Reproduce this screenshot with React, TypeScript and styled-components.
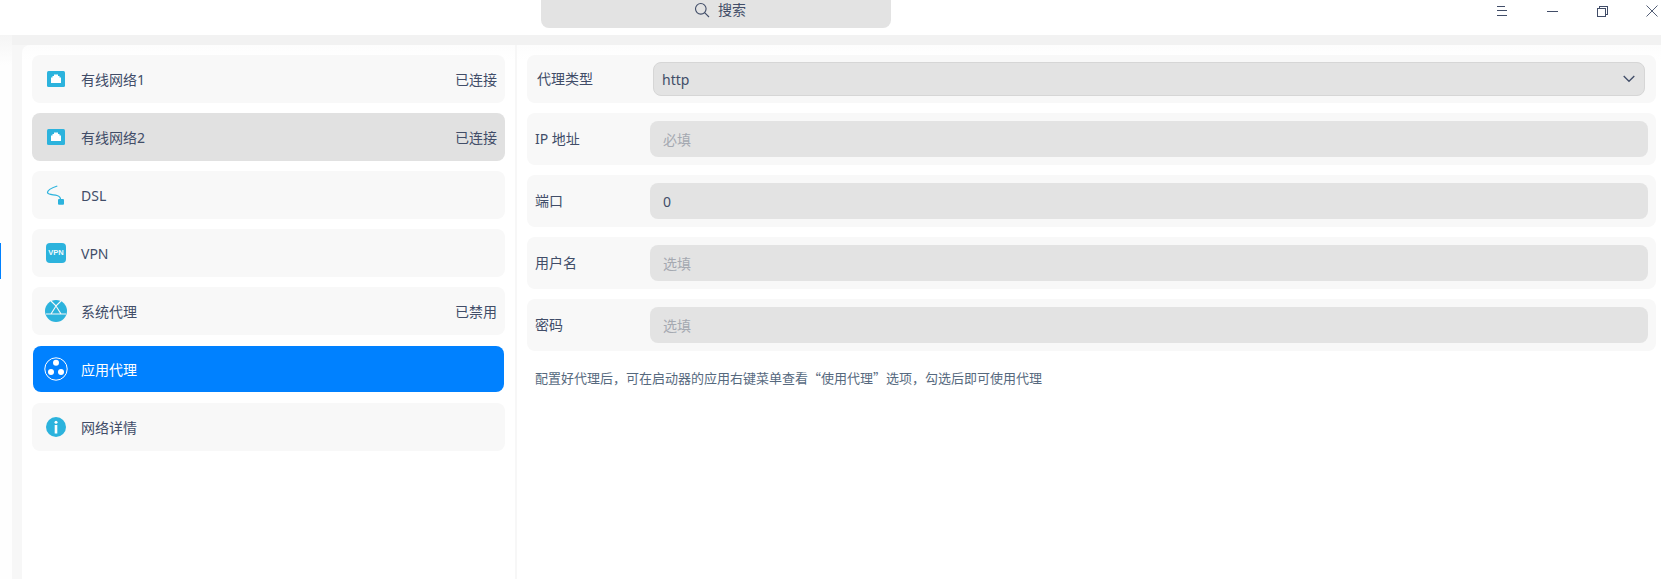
import * as React from 'react';
import styled, { createGlobalStyle } from 'styled-components';

const GlobalStyle = createGlobalStyle`
  html, body {
    margin: 0;
    padding: 0;
    height: 100%;
    overflow: hidden;
    background: #fff;
  }
  body {
    font-family: 'Noto Sans', 'Noto Sans CJK SC', sans-serif;
    font-size: 14px;
    color: #414d68;
  }
`;

const Window = styled.div`
  display: flex;
  flex-direction: column;
  height: 100vh;
  overflow: hidden;
`;

const TitleBar = styled.header`
  display: flex;
  align-items: flex-start;
  flex: 0 0 35px;
  padding-left: 541px;
  background: #fff;
`;

const SearchBox = styled.div`
  display: flex;
  align-items: flex-start;
  justify-content: center;
  gap: 8px;
  width: 350px;
  height: 28px;
  box-sizing: border-box;
  padding: 0 0 0 8px;
  border-radius: 0 0 8px 8px;
  background: #e3e3e3;
  line-height: 20px;
  svg {
    margin-top: 2px;
  }
`;

const WindowButtons = styled.div`
  display: flex;
  margin-left: auto;
  margin-right: -16px;
`;

const WindowButton = styled.div`
  display: flex;
  align-items: center;
  justify-content: center;
  width: 50px;
  height: 22px;
`;

const Body = styled.div`
  display: flex;
  flex: 1;
  min-height: 0;
`;

const Rail = styled.div`
  flex: 0 0 12px;
  padding-top: 208px;
  background: linear-gradient(#f5f5f5, #fefefe 30px);
`;

const RailMark = styled.div`
  width: 1px;
  height: 36px;
  background: #0081ff;
`;

const Content = styled.div`
  display: flex;
  flex: 1;
  min-width: 0;
  padding: 10px 0 0 10px;
  background: linear-gradient(#f2f2f2 10px, #f7f7f7 10px);
`;

const Panel = styled.main`
  display: flex;
  flex: 1;
  min-width: 0;
  border-radius: 8px 0 0 0;
  background: linear-gradient(#fdfdfd, #fff 15px);
`;

const Sidebar = styled.nav`
  display: flex;
  flex-direction: column;
  gap: 10px;
  flex: 0 0 495px;
  box-sizing: border-box;
  padding: 10px 10px 0 10px;
  border-right: 2px solid #f7f7f7;
`;

const NavItem = styled.div<{ $state?: 'hover' | 'active' }>`
  display: flex;
  align-items: center;
  height: ${(p) => (p.$state === 'active' ? 46 : 48)}px;
  margin: ${(p) => (p.$state === 'active' ? '1px' : '0')};
  box-sizing: border-box;
  padding: ${(p) => (p.$state === 'active' ? '0 7px 0 11px' : '0 8px 0 12px')};
  border-radius: 8px;
  background-color: ${(p) =>
    p.$state === 'active' ? '#0081ff' : p.$state === 'hover' ? '#e1e1e1' : '#f8f8f8'};
  color: ${(p) => (p.$state === 'active' ? '#fff' : '#414d68')};
`;

const NavIcon = styled.span`
  display: flex;
  align-items: center;
  justify-content: center;
  flex: 0 0 24px;
  height: 24px;
  margin-right: 13px;
`;

const NavName = styled.span`
  flex: 1;
`;

const NavStatus = styled.span`
  color: #414d68;
`;

const VpnBadge = styled.span`
  display: flex;
  align-items: center;
  justify-content: center;
  width: 20px;
  height: 20px;
  border-radius: 4px;
  background: #2cb3dd;
  color: #f4fbfd;
  font-family: 'Liberation Sans', sans-serif;
  font-size: 7.5px;
  font-weight: 700;
  line-height: 1;
`;

const Form = styled.section`
  display: flex;
  flex-direction: column;
  gap: 10px;
  flex: 1;
  min-width: 0;
  padding: 10px 5px 0 10px;
`;

const FormRow = styled.div<{ $compact?: boolean }>`
  display: flex;
  align-items: center;
  height: ${(p) => (p.$compact ? 48 : 52)}px;
  box-sizing: border-box;
  padding: ${(p) => (p.$compact ? '0 11px 0 10px' : '0 8px')};
  border-radius: 8px;
  background: #f8f8f8;
`;

const FormLabel = styled.label<{ $compact?: boolean }>`
  flex: 0 0 ${(p) => (p.$compact ? 116 : 115)}px;
  line-height: 20px;
`;

const Input = styled.div<{ $placeholder?: boolean }>`
  display: flex;
  align-items: center;
  flex: 1;
  height: 36px;
  padding: 0 13px;
  border-radius: 8px;
  background: #e3e3e3;
  color: ${(p) => (p.$placeholder ? '#a5a9b1' : '#414d68')};
`;

const Select = styled.div`
  display: flex;
  align-items: center;
  justify-content: space-between;
  flex: 1;
  height: 34px;
  box-sizing: border-box;
  padding: 0 9px 0 8px;
  border: 1px solid #d6d6d6;
  border-radius: 8px;
  background: #e3e3e3;
`;

const Note = styled.p`
  margin: 7px 0 0;
  padding-left: 8px;
  color: #56697e;
  font-family: 'Noto Sans CJK SC', sans-serif;
  font-size: 13px;
  line-height: 20px;
`;

const ICON_BLUE = '#2cb3dd';

const SearchIcon = () => (
  <svg width="16" height="16" viewBox="0 0 16 16" fill="none" stroke="#414d68" strokeWidth="1.1">
    <circle cx="6.8" cy="6.8" r="5.3" />
    <path d="M10.6 10.6 15 15" />
  </svg>
);

const MenuIcon = () => (
  <svg width="12" height="12" viewBox="0 0 12 12" stroke="#414d68" strokeWidth="1" shapeRendering="crispEdges">
    <path d="M1 1.5h8M1 5.5h10M1 10.5h10" />
  </svg>
);

const MinimizeIcon = () => (
  <svg width="12" height="12" viewBox="0 0 12 12" stroke="#414d68" strokeWidth="1" shapeRendering="crispEdges">
    <path d="M1 6.5h11" />
  </svg>
);

const RestoreIcon = () => (
  <svg width="12" height="12" viewBox="0 0 12 12" fill="none" stroke="#414d68" strokeWidth="1" shapeRendering="crispEdges">
    <rect x="1.5" y="3.5" width="8" height="8" />
    <path d="M3.5 3.5v-2h8v8h-2" />
  </svg>
);

const CloseIcon = () => (
  <svg width="12" height="12" viewBox="0 0 12 12" stroke="#414d68" strokeWidth="0.9">
    <path d="M.5.5l11 11M11.5.5l-11 11" />
  </svg>
);

const ChevronIcon = () => (
  <svg width="12" height="8" viewBox="0 0 12 8" fill="none" stroke="#414d68" strokeWidth="1.3">
    <path d="M.7 1 6 6.3 11.3 1" />
  </svg>
);

const WiredIcon = () => (
  <svg width="18" height="16" viewBox="0 0 18 16">
    <rect width="18" height="16" rx="1.5" fill={ICON_BLUE} />
    <path d="M4 12V6.5h1.5V5H7V3.5h4V5h1.5v1.5H14V12z" fill="#fff" />
  </svg>
);

const DslIcon = () => (
  <svg width="20" height="20" viewBox="0 0 20 20" fill="none">
    <path
      d="M11.3 1C7 2.5 1.5 5 1.5 7.5 1.5 10 8 9.5 11 10.5c2.5.8 3.5 2 3.5 4"
      stroke={ICON_BLUE}
      strokeWidth="1.3"
    />
    <rect x="12" y="14" width="6" height="5.7" rx="1" fill={ICON_BLUE} />
  </svg>
);

const SystemProxyIcon = () => (
  <svg width="22" height="22" viewBox="0 0 22 22">
    <circle cx="11" cy="11" r="11" fill={ICON_BLUE} />
    <path d="M6 1l5 5 5-5M11 6l-5 8h10zM1 14h5M16 14h5" stroke="#f8f8f8" strokeWidth="1.1" fill="none" />
  </svg>
);

const AppProxyIcon = () => (
  <svg width="24" height="24" viewBox="0 0 24 24" fill="#fff">
    <circle cx="12" cy="12" r="11.2" fill="none" stroke="#fff" strokeWidth="1" />
    <circle cx="12" cy="5.8" r="3" />
    <circle cx="7" cy="15" r="3" />
    <circle cx="17" cy="15" r="3" />
  </svg>
);

const InfoIcon = () => (
  <svg width="20" height="20" viewBox="0 0 20 20">
    <circle cx="10" cy="10" r="10" fill={ICON_BLUE} />
    <circle cx="10" cy="5.2" r="1.5" fill="#fff" />
    <rect x="8.7" y="8" width="2.6" height="8.5" fill="#fff" />
  </svg>
);

export default function App() {
  return (
    <Window>
      <GlobalStyle />
      <TitleBar>
        <SearchBox>
          <SearchIcon />
          <span>搜索</span>
        </SearchBox>
        <WindowButtons>
          <WindowButton>
            <MenuIcon />
          </WindowButton>
          <WindowButton>
            <MinimizeIcon />
          </WindowButton>
          <WindowButton>
            <RestoreIcon />
          </WindowButton>
          <WindowButton>
            <CloseIcon />
          </WindowButton>
        </WindowButtons>
      </TitleBar>
      <Body>
        <Rail>
          <RailMark />
        </Rail>
        <Content>
          <Panel>
            <Sidebar>
              <NavItem>
                <NavIcon>
                  <WiredIcon />
                </NavIcon>
                <NavName>有线网络1</NavName>
                <NavStatus>已连接</NavStatus>
              </NavItem>
              <NavItem $state="hover">
                <NavIcon>
                  <WiredIcon />
                </NavIcon>
                <NavName>有线网络2</NavName>
                <NavStatus>已连接</NavStatus>
              </NavItem>
              <NavItem>
                <NavIcon>
                  <DslIcon />
                </NavIcon>
                <NavName>DSL</NavName>
              </NavItem>
              <NavItem>
                <NavIcon>
                  <VpnBadge>VPN</VpnBadge>
                </NavIcon>
                <NavName>VPN</NavName>
              </NavItem>
              <NavItem>
                <NavIcon>
                  <SystemProxyIcon />
                </NavIcon>
                <NavName>系统代理</NavName>
                <NavStatus>已禁用</NavStatus>
              </NavItem>
              <NavItem $state="active">
                <NavIcon>
                  <AppProxyIcon />
                </NavIcon>
                <NavName>应用代理</NavName>
              </NavItem>
              <NavItem>
                <NavIcon>
                  <InfoIcon />
                </NavIcon>
                <NavName>网络详情</NavName>
              </NavItem>
            </Sidebar>
            <Form>
              <FormRow $compact>
                <FormLabel $compact>代理类型</FormLabel>
                <Select>
                  <span>http</span>
                  <ChevronIcon />
                </Select>
              </FormRow>
              <FormRow>
                <FormLabel>IP 地址</FormLabel>
                <Input $placeholder>必填</Input>
              </FormRow>
              <FormRow>
                <FormLabel>端口</FormLabel>
                <Input>0</Input>
              </FormRow>
              <FormRow>
                <FormLabel>用户名</FormLabel>
                <Input $placeholder>选填</Input>
              </FormRow>
              <FormRow>
                <FormLabel>密码</FormLabel>
                <Input $placeholder>选填</Input>
              </FormRow>
              <Note>配置好代理后，可在启动器的应用右键菜单查看“使用代理”选项，勾选后即可使用代理</Note>
            </Form>
          </Panel>
        </Content>
      </Body>
    </Window>
  );
}
